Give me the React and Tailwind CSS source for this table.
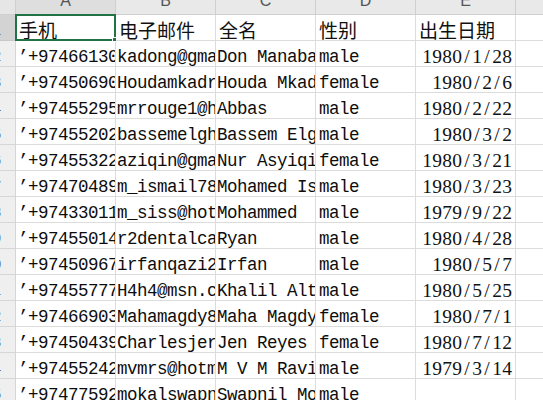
import React from 'react';

const cols = ['A', 'B', 'C', 'D', 'E'];

const rows = [
  ['’+97466130112', 'kadong@gmail.com', 'Don Manabat', 'male', '1980/1/28'],
  ['’+97450690245', 'Houdamkadrem@yahoo.com', 'Houda Mkaddem', 'female', '1980/2/6'],
  ['’+97455295031', 'mrrouge1@hotmail.com', 'Abbas', 'male', '1980/2/22'],
  ['’+97455202784', 'bassemelghazaly@gmail.com', 'Bassem Elghazaly', 'male', '1980/3/2'],
  ['’+97455322190', 'aziqin@gmail.com', 'Nur Asyiqin', 'female', '1980/3/21'],
  ['’+97470489326', 'm_ismail78@hotmail.com', 'Mohamed Ismail', 'male', '1980/3/23'],
  ['’+97433011457', 'm_siss@hotmail.com', 'Mohammed', 'male', '1979/9/22'],
  ['’+97455014683', 'r2dentalcare@gmail.com', 'Ryan', 'male', '1980/4/28'],
  ['’+97450967521', 'irfanqazi2@gmail.com', 'Irfan', 'male', '1980/5/7'],
  ['’+97455777904', 'H4h4@msn.com', 'Khalil Altamimi', 'male', '1980/5/25'],
  ['’+97466903318', 'Mahamagdy80@gmail.com', 'Maha Magdy', 'female', '1980/7/1'],
  ['’+97450439962', 'Charlesjereyes@gmail.com', 'Jen Reyes', 'female', '1980/7/12'],
  ['’+97455242075', 'mvmrs@hotmail.com', 'M V M Ravi', 'male', '1979/3/14'],
  ['’+97477592648', 'mokalswapnil@gmail.com', 'Swapnil Mokal', 'male', ''],
];

const headers = ['手机', '电子邮件', '全名', '性别', '出生日期'];

const line = 'border-r border-b border-[#dcdcdc]';

function DateText({ value }) {
  return (
    <span className="flex font-['Liberation_Serif',serif] text-[19.5px] leading-none text-[#111]">
      {value.split('').map((ch, i) => (
        <span key={i} className="inline-block w-[10px] text-center">
          {ch}
        </span>
      ))}
    </span>
  );
}

export default function App() {
  return (
    <div className="w-[543px] h-[400px] overflow-hidden bg-white">
      <div className="grid grid-cols-[16px_100px_100px_100px_100px_100px_1fr] grid-rows-[15px_repeat(15,26px)]">
        {/* column headers */}
        <div className="bg-[#e6e6e6] border-r border-b border-[#cfcfcf]" />
        {cols.map((c, i) => (
          <div
            key={c}
            className={`flex justify-center overflow-hidden border-r border-b border-[#cfcfcf] ${
              i === 0 ? 'bg-[#dedede]' : 'bg-[#e9e9e9]'
            }`}
          >
            <span className="-mt-[9px] font-['Liberation_Sans',sans-serif] text-[16px] leading-[20px] text-[#555]">
              {c}
            </span>
          </div>
        ))}
        <div className="bg-[#e9e9e9] border-b border-[#cfcfcf]" />

        {/* header row 1 */}
        <div className="flex justify-end items-center overflow-hidden pt-[6px] pr-[14px] bg-[#d3d3d3] border-r border-b border-[#c8c8c8]">
          <span className="font-['Liberation_Sans',sans-serif] text-[14px] text-[#444]">1</span>
        </div>
        {headers.map((h, i) => (
          <div key={h} className={`relative flex items-center pt-[4px] pl-[3px] ${line}`}>
            <span className="whitespace-nowrap font-['Noto_Sans_CJK_SC',sans-serif] text-[19px] leading-none text-[#111]">
              {h}
            </span>
            {i === 0 && (
              <div className="absolute -left-[1px] -top-[1px] -right-[1px] -bottom-[1px] border-2 border-[#217346]">
                <div className="absolute -right-[3px] -bottom-[3px] w-[5px] h-[5px] bg-[#217346] border border-white" />
              </div>
            )}
          </div>
        ))}
        <div className="border-b border-[#dcdcdc]" />

        {/* data rows */}
        {rows.map((r, ri) => (
          <React.Fragment key={ri}>
            <div className="flex justify-end items-center overflow-hidden pt-[6px] pr-[14px] bg-[#efefef] border-r border-b border-[#d6d6d6]">
              <span className="font-['Liberation_Sans',sans-serif] text-[14px] text-[#555]">{ri + 2}</span>
            </div>
            {r.map((v, ci) =>
              ci === 4 ? (
                <div key={ci} className={`flex items-center justify-end pt-[7px] pr-[3px] ${line}`}>
                  {v && <DateText value={v} />}
                </div>
              ) : (
                <div
                  key={ci}
                  className={`flex items-center overflow-hidden pt-[8px] ${
                    ci === 0 ? 'pl-[2px]' : ci === 3 ? 'pl-[3px]' : 'pl-[1px]'
                  } ${line}`}
                >
                  <span className="whitespace-pre font-['Liberation_Mono',monospace] text-[17.5px] tracking-[-0.5px] leading-none text-[#0d0d0d]">
                    {v}
                  </span>
                </div>
              )
            )}
            <div className="border-b border-[#dcdcdc]" />
          </React.Fragment>
        ))}
      </div>
    </div>
  );
}
